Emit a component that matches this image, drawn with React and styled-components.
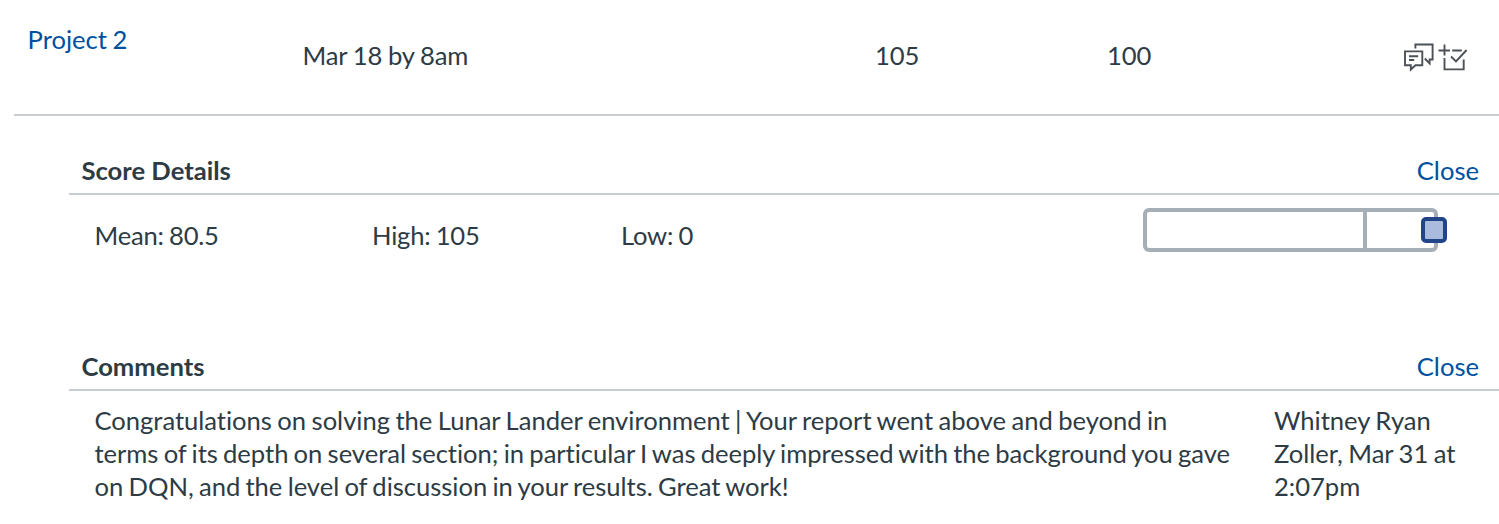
import React from 'react';
import styled, { createGlobalStyle } from 'styled-components';

const GlobalStyle = createGlobalStyle`
  * { box-sizing: border-box; }
  body {
    margin: 0;
    background: #fff;
    color: #2d3b45;
    font: 400 25.6px/33px Lato, "Liberation Sans", sans-serif;
    font-variant-ligatures: none;
    overflow: hidden;
  }
`;

const Page = styled.main`
  height: 524px;
  overflow: hidden;
`;

const AssignmentRow = styled.section`
  display: grid;
  grid-template-columns: 289px 572.5px 232px 296px 1fr;
  height: 116px;
  margin-left: 14px;
  padding: 23px 0 0 14px;
  border-bottom: 2px solid #c7cdd1;
`;

const Link = styled.a`
  color: #0050a0;
  text-decoration: none;
`;

const Title = styled.div`
  margin-left: -0.5px;
  word-spacing: -1px;
`;

const Cell = styled.div`
  padding-top: 16px;
  margin-left: -14.5px;
  letter-spacing: -0.15px;
  word-spacing: -0.6px;
`;

const Icons = styled.div`
  display: flex;
  gap: 4px;
  padding-top: 19px;
  margin-left: -14.5px;
`;

const Icon = styled.svg`
  display: block;
  fill: none;
  stroke: #4b5156;
  stroke-width: 1.9;
`;

const Section = styled.section`
  height: ${(p) => p.$height}px;
  margin-left: 69px;
`;

const SectionHeader = styled.header`
  display: flex;
  justify-content: space-between;
  align-items: flex-end;
  height: 79px;
  padding: 0 20px 6px 12.5px;
  border-bottom: 2px solid #c7cdd1;
`;

const Heading = styled.h2`
  margin: 0;
  font-size: inherit;
  font-weight: 700;
`;

const Stats = styled.div`
  display: grid;
  grid-template-columns: 277.5px 249px 522px 1fr;
  padding: 13px 0 0 25.5px;
`;

const Stat = styled.div`
  padding-top: 11px;
  letter-spacing: -0.22px;
  word-spacing: -1px;
`;

const ScoreBar = styled.div`
  position: relative;
  width: 295px;
  height: 44px;
  border: 4px solid #a5afb5;
  border-radius: 6px;
`;

const MeanLine = styled.div`
  width: 4px;
  height: 36px;
  margin-left: 216px;
  background: #a5afb5;
`;

const ScoreMarker = styled.div`
  position: absolute;
  top: 5px;
  right: -13px;
  width: 26px;
  height: 26px;
  border: 4px solid #224488;
  border-radius: 5px;
  background: #aabbdd;
`;

const Comment = styled.div`
  display: grid;
  grid-template-columns: 1179.5px 1fr;
  padding: 13px 0 0 25.5px;
  letter-spacing: -0.03px;
`;

const Line = styled.span`
  display: block;
  white-space: nowrap;
  word-spacing: ${(p) => p.$space || -1.3}px;
`;

export default function App() {
  return (
    <Page>
      <GlobalStyle />
      <AssignmentRow>
        <Title><Link>Project 2</Link></Title>
        <Cell>Mar 18 by 8am</Cell>
        <Cell>105</Cell>
        <Cell>100</Cell>
        <Icons>
          <Icon width="31" height="30" viewBox="0 0 31 30">
            <path d="M12.4 6.6V2.5H29.6V17.5H26.6V21.4L21.8 16.5" />
            <path d="M2 9.4H19.3V23.2H12.5L7.8 27.5V23.2H2Z" />
            <path d="M6 14.3H15.2M6 18H11.2" />
          </Icon>
          <Icon width="30" height="30" viewBox="0 0 30 30">
            <path d="M6.5 2.5V13.6M0.5 8.5H12M14.2 8.5H23.8M6.5 16V27.4H25.7V17.5" />
            <path d="M13 14.5L18 19.5L28.6 8" />
          </Icon>
        </Icons>
      </AssignmentRow>
      <Section $height={196}>
        <SectionHeader>
          <Heading>Score Details</Heading>
          <Link>Close</Link>
        </SectionHeader>
        <Stats>
          <Stat>Mean: 80.5</Stat>
          <Stat>High: 105</Stat>
          <Stat>Low: 0</Stat>
          <ScoreBar>
            <MeanLine />
            <ScoreMarker />
          </ScoreBar>
        </Stats>
      </Section>
      <Section $height={212}>
        <SectionHeader>
          <Heading>Comments</Heading>
          <Link>Close</Link>
        </SectionHeader>
        <Comment>
          <div>
            <Line $space={-1.04}>Congratulations on solving the Lunar Lander environment | Your report went above and beyond in</Line>
            <Line>terms of its depth on several section; in particular I was deeply impressed with the background you gave</Line>
            <Line $space={-1.25}>on DQN, and the level of discussion in your results. Great work!</Line>
          </div>
          <div>
            <Line $space={-1}>Whitney Ryan</Line>
            <Line $space={-1}>Zoller, Mar 31 at</Line>
            <Line>2:07pm</Line>
          </div>
        </Comment>
      </Section>
    </Page>
  );
}
